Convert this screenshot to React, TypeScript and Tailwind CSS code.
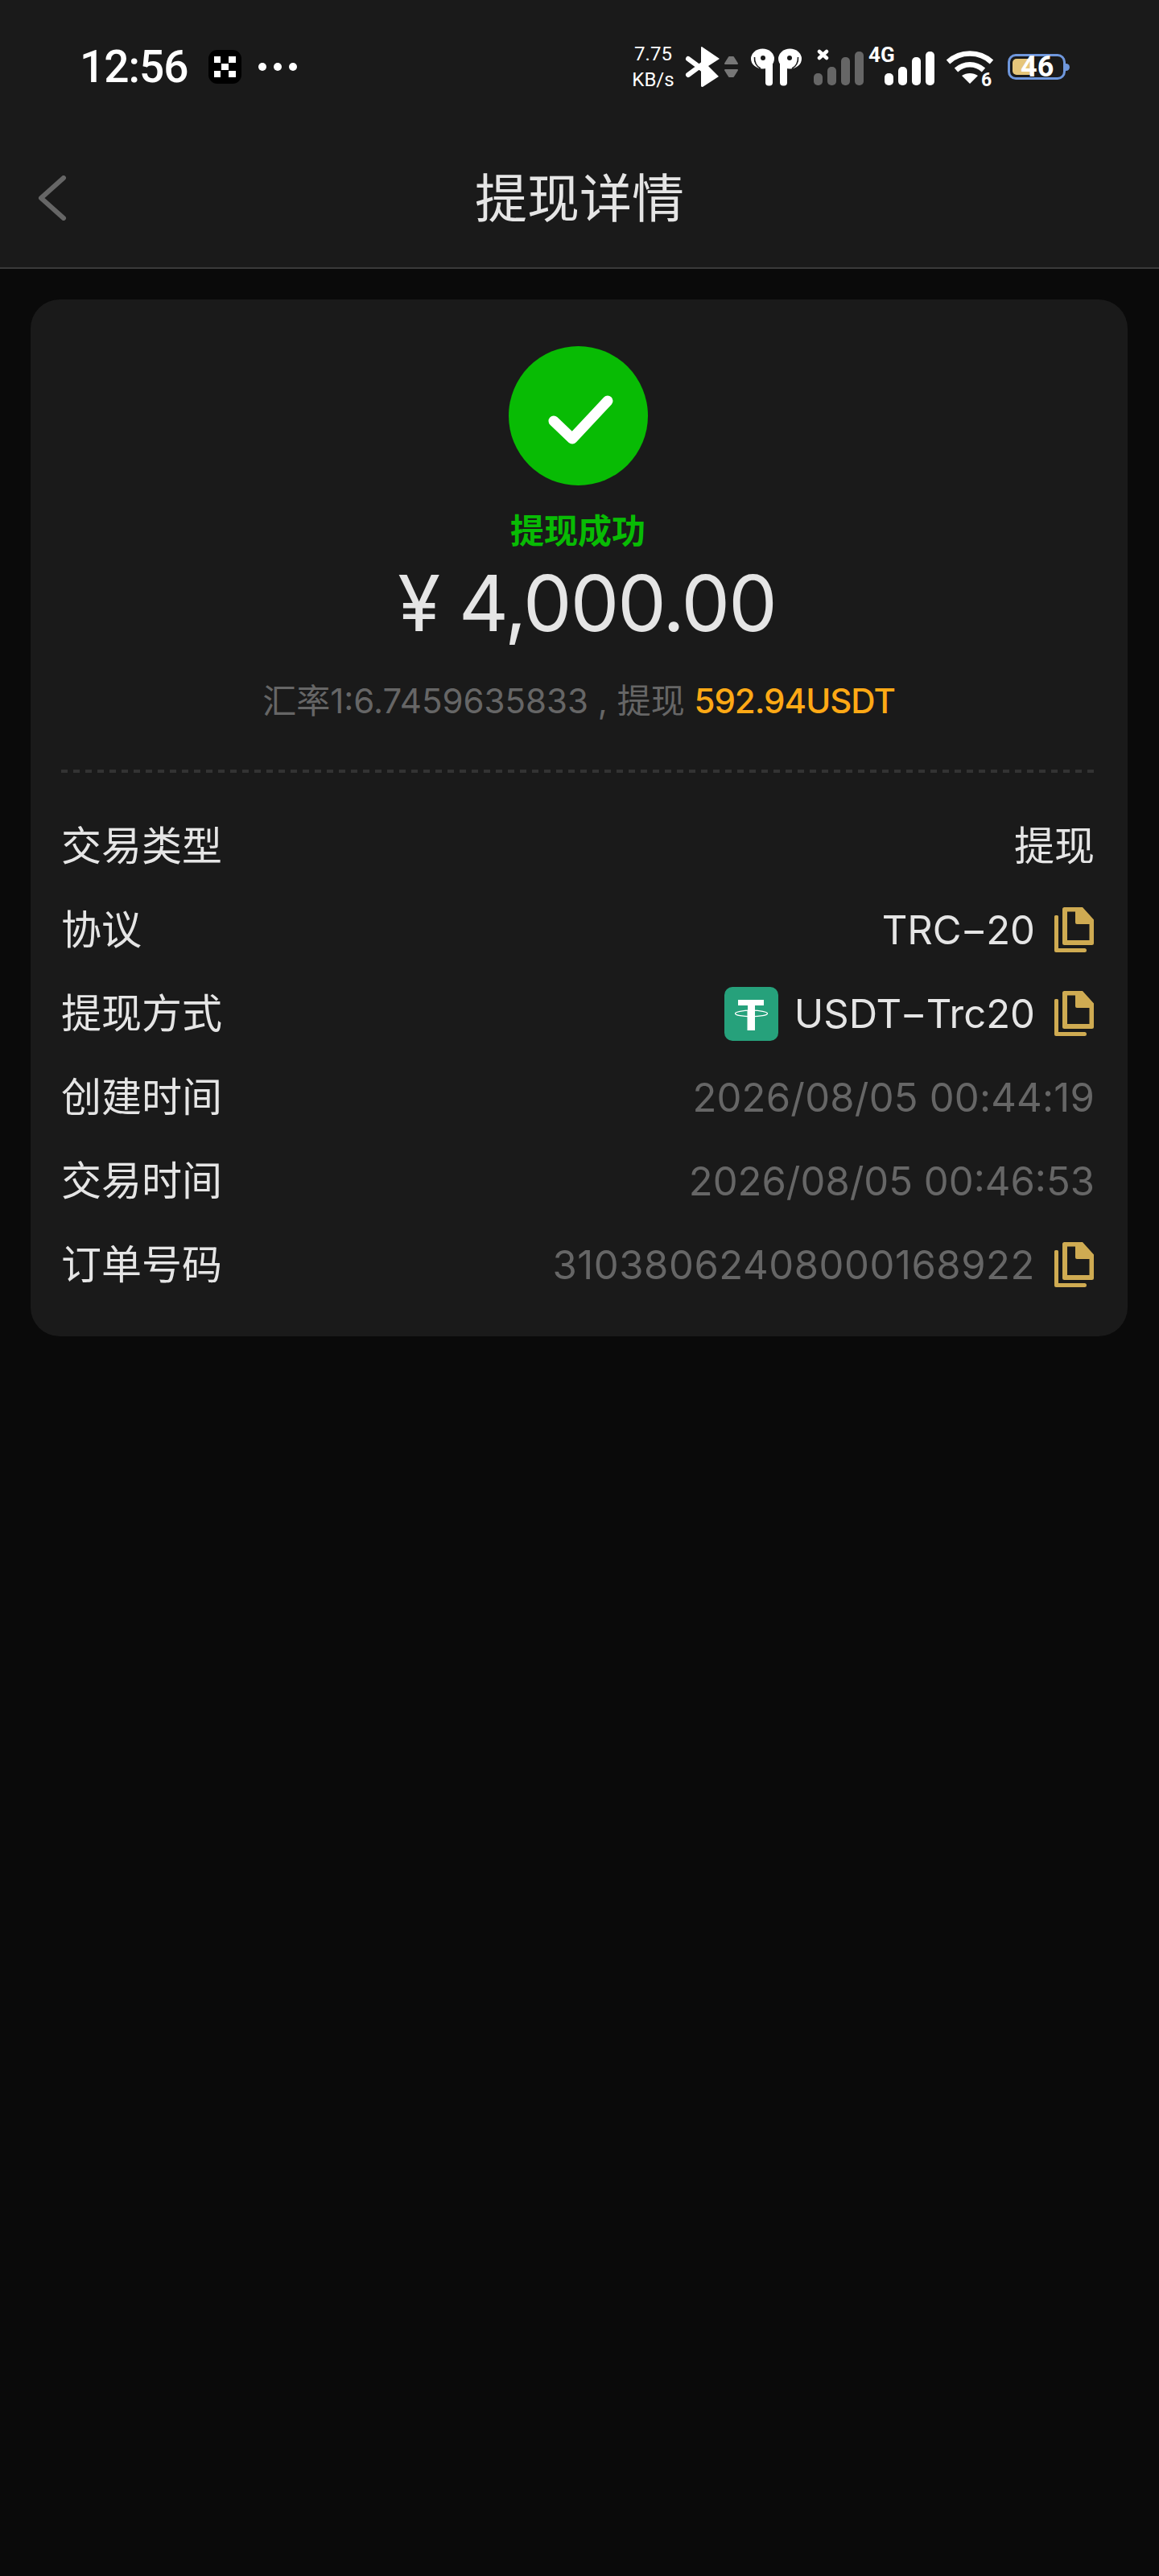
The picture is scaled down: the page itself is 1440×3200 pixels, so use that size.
const FONT = "font-['Inter','Noto_Sans_CJK_SC',sans-serif]";

const CopyIcon = () => (
  <svg width="49" height="56" viewBox="0 0 49 56" className="mr-[1px] ml-[24px] shrink-0" fill="#cfab52">
    <path d="M1.5 10 H3.5 A1.5 1.5 0 0 1 5 11.5 V51 H37.5 A2.5 2.5 0 0 1 37.5 56 H2 A2 2 0 0 1 0 54 V11.5 A1.5 1.5 0 0 1 1.5 10 Z" />
    <path
      fillRule="evenodd"
      d="M12.5 0 H35 L49 15.5 V44.5 A2.5 2.5 0 0 1 46.5 47 H12.5 A2.5 2.5 0 0 1 10 44.5 V2.5 A2.5 2.5 0 0 1 12.5 0 Z M16 5.5 V41 H43.5 V21 H28 A2 2 0 0 1 26 19 V5.5 Z"
    />
  </svg>
);

const TetherIcon = () => (
  <svg width="67" height="67" viewBox="0 0 67 67" className="shrink-0">
    <rect width="67" height="67" rx="10" fill="#26a17b" />
    <path d="M17 16 H49 V23 H38 V30 H29 V23 H17 Z M28.5 30 H38 V54 H28.5 Z" fill="#fff" />
    <ellipse cx="33.5" cy="33" rx="20" ry="3.8" fill="none" stroke="#fff" strokeWidth="1.3" />
  </svg>
);

const Chevron = () => (
  <svg width="36" height="56" viewBox="0 0 36 56" fill="none" stroke="#666" strokeWidth="6" strokeLinecap="round" strokeLinejoin="round">
    <path d="M32 3 L4 28 L32 53" />
  </svg>
);

const OkxIcon = () => (
  <svg width="41" height="42" viewBox="0 0 41 42" className="shrink-0">
    <rect width="41" height="42" rx="11" fill="#000" />
    <path
      fill="#fff"
      d="M7 8 H15 V16 H7 Z M25 8 H34 V16 H25 Z M16 17 H25 V25 H16 Z M7 26 H15 V34 H7 Z M25 26 H34 V34 H25 Z"
    />
  </svg>
);

const Bluetooth = () => (
  <svg width="44" height="50" viewBox="0 0 44 50" className="shrink-0">
    <path d="M20 1 Q20 0 21 0 L43 15 L29 24 L42 37 L22 50 Q20 50 20 49 Z" fill="#fff" />
    <path d="M4 15 L27 32 M4 35 L27 18" stroke="#fff" strokeWidth="6" strokeLinecap="round" />
  </svg>
);

const UpDown = () => (
  <svg width="17" height="28" viewBox="0 0 17 28" className="shrink-0" fill="#777" stroke="#777" strokeWidth="2" strokeLinejoin="round">
    <path d="M6 2 H11 L16 10 H1 Z" />
    <path d="M1 18 H16 L11 26 H6 Z" />
  </svg>
);

const AirPods = () => (
  <svg width="63" height="47" viewBox="0 0 63 47" className="shrink-0">
    <ellipse cx="14.5" cy="13" rx="14.5" ry="12.5" fill="#fff" />
    <rect x="18" y="8" width="9" height="38.5" rx="4" fill="#fff" />
    <circle cx="15" cy="12" r="3" fill="#1a1a1a" />
    <path d="M4.5 11 C4 17 7 23 12 25" fill="none" stroke="#1a1a1a" strokeWidth="1.6" />
    <ellipse cx="48.5" cy="13" rx="14.5" ry="12.5" fill="#fff" />
    <rect x="36" y="8" width="9" height="38.5" rx="4" fill="#fff" />
    <circle cx="48" cy="12" r="3" fill="#1a1a1a" />
    <path d="M58.5 11 C59 17 56 23 51 25" fill="none" stroke="#1a1a1a" strokeWidth="1.6" />
  </svg>
);

const Bars = ({ color }: { color: string }) => (
  <svg width="62" height="42" viewBox="0 0 62 42" fill={color} className="shrink-0">
    <rect x="0" y="27" width="11" height="15" rx="5" />
    <rect x="17" y="19" width="11" height="23" rx="5" />
    <rect x="34" y="7" width="11" height="35" rx="5" />
    <rect x="51" y="0" width="11" height="42" rx="5" />
  </svg>
);

const Wifi = () => (
  <svg width="60" height="42" viewBox="0 0 60 42" fill="none" stroke="#fff" strokeWidth="6.5" className="shrink-0">
    <path d="M3 15 C18 1 42 1 57 15" />
    <path d="M13 25 C23 16 37 16 47 25" />
    <path d="M30 42 L20 32 C26 28 34 28 40 32 Z" fill="#fff" stroke="none" />
  </svg>
);

const SignalX = () => (
  <svg width="15" height="14" viewBox="0 0 15 14" className="absolute left-[4px] top-[-3px]" stroke="#fff" strokeWidth="4.5" strokeLinecap="round">
    <path d="M3 3 L12 11 M12 3 L3 11" />
  </svg>
);

const StatusBar = () => (
  <div className="flex h-[166px] items-center pl-[99px] font-['Roboto',sans-serif] text-white">
    <span className="w-[134px] text-[55px] leading-none font-medium tracking-[-1px]">12:56</span>
    <div className="ml-[26px]">
      <OkxIcon />
    </div>
    <div className="ml-[21px] flex gap-[9px]">
      <i className="h-[10px] w-[10px] rounded-full bg-white" />
      <i className="h-[10px] w-[10px] rounded-full bg-white" />
      <i className="h-[10px] w-[10px] rounded-full bg-white" />
    </div>

    <div className="ml-[416px] flex w-[53px] flex-col items-center text-[24px] leading-[32px]">
      <span>7.75</span>
      <span>KB/s</span>
    </div>
    <div className="ml-[13px]">
      <Bluetooth />
    </div>
    <div className="ml-[5px]">
      <UpDown />
    </div>
    <div className="ml-[16px]">
      <AirPods />
    </div>
    <div className="relative ml-[15px] mt-[4px]">
      <Bars color="#666" />
      <SignalX />
    </div>
    <div className="relative ml-[26px] mt-[4px]">
      <Bars color="#fff" />
      <span className="absolute left-[-20px] top-[-9px] text-[26px] leading-[26px] font-bold">4G</span>
    </div>
    <div className="relative ml-[14px] mt-[-1px]">
      <Wifi />
      <span className="absolute left-[44px] top-[26px] text-[23px] leading-[23px] font-bold">6</span>
    </div>
    <div className="relative ml-[17px] flex items-center">
      <div className="h-[32px] w-[72px] rounded-[10px] border-[3px] border-[#6f97dc] p-[3px]">
        <div className="h-full w-[24px] rounded-l-[5px] bg-[#e6c67a]" />
      </div>
      <div className="h-[9px] w-[5px] rounded-r-full bg-[#6f97dc]" />
      <span className="absolute left-[16px] top-[-3px] text-[36px] leading-[38px] font-bold">46</span>
    </div>
  </div>
);

const Row = ({ label, children }: { label: string; children: React.ReactNode }) => (
  <div className="flex h-[104px] items-center justify-between">
    <span className="text-[50px] leading-none text-[#e5e5e5]">{label}</span>
    <div className="flex items-center">{children}</div>
  </div>
);

export default function App() {
  return (
    <div className={`min-h-[3200px] bg-[#0a0a0a] ${FONT}`}>
      <header className="border-b-2 border-[#3a3a3a] bg-[#1a1a1a]">
        <StatusBar />
        <div className="relative flex h-[166px] items-center justify-center pb-[6px]">
          <div className="absolute left-[47px] top-[52px]">
            <Chevron />
          </div>
          <h1 className="text-[65px] leading-none font-normal text-[#e5e5e5]">提现详情</h1>
        </div>
      </header>

      <main className="pt-[38px] pl-[38px] pr-[39px]">
        <section className="rounded-[36px] bg-[#1a1a1a] pt-[58px] pb-[37px] pl-[38px] pr-[41px]">
          <div className="flex flex-col items-center">
            <div className="ml-[1px] flex h-[173px] w-[173px] items-center justify-center rounded-full bg-[#08bb04]">
              <svg width="173" height="173" viewBox="0 0 173 173" fill="none" stroke="#fff" strokeWidth="13" strokeLinecap="round" strokeLinejoin="round">
                <path d="M56 93 L79 115 L123 68" />
              </svg>
            </div>
            <p className="mt-[29px] text-[42px] leading-[56px] font-bold text-[#08bb04]">提现成功</p>
            <p className="mt-[6px] ml-[22px] text-[96px] leading-[110px] tracking-[-2px] text-[#e5e5e5]">¥ 4,000.00</p>
            <p className="mt-[37px] ml-[2px] text-[42px] leading-[60px] text-[#666]">
              汇率1:6.7459635833 , 提现 <span className="font-medium tracking-[-1px] text-[#ffa915]">592.94USDT</span>
            </p>
          </div>

          <div className="mt-[55px] mb-[39px] h-[4px] bg-[repeating-linear-gradient(90deg,#333_0,#333_8px,transparent_8px,transparent_15px)]" />

          <Row label="交易类型">
            <span className="text-[50px] leading-none text-[#e5e5e5]">提现</span>
          </Row>
          <Row label="协议">
            <span className="text-[49px] leading-none text-[#e5e5e5]">
              TRC<span className="inline-block scale-x-150 px-[4px]">-</span>20
            </span>
            <CopyIcon />
          </Row>
          <Row label="提现方式">
            <TetherIcon />
            <span className="ml-[20px] text-[49px] leading-none text-[#e5e5e5]">
              USDT<span className="inline-block scale-x-150 px-[4px]">-</span>Trc20
            </span>
            <CopyIcon />
          </Row>
          <Row label="创建时间">
            <span className="text-[49px] leading-none tracking-[0.2px] text-[#666]">2026/08/05 00:44:19</span>
          </Row>
          <Row label="交易时间">
            <span className="text-[49px] leading-none text-[#666]">2026/08/05 00:46:53</span>
          </Row>
          <Row label="订单号码">
            <span className="text-[49px] leading-none tracking-[0.55px] text-[#666]">31038062408000168922</span>
            <CopyIcon />
          </Row>
        </section>
      </main>
    </div>
  );
}
